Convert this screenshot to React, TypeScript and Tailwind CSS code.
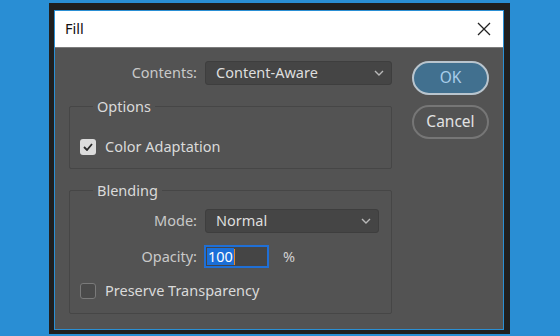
import React from "react";

const font = { fontFamily: '"Noto Sans", "Open Sans", sans-serif' };

function Chevron() {
  return (
    <svg width="10" height="6" viewBox="0 0 10 6" className="shrink-0">
      <polyline points="1,1 5,5 9,1" fill="none" stroke="#b9b9b9" strokeWidth="1.4" />
    </svg>
  );
}

function Select({ value, width }: { value: string; width: string }) {
  return (
    <div
      className={`flex h-[24px] ${width} items-center justify-between rounded-[3px] border border-[#3e3e3e] bg-[#454545] pl-[10px] pr-[7px] text-[14.5px] text-[#dedede]`}
    >
      <span>{value}</span>
      <Chevron />
    </div>
  );
}

function Checkbox({ checked }: { checked?: boolean }) {
  if (checked) {
    return (
      <div className="flex h-[16px] w-[16px] items-center justify-center rounded-[3px] bg-[#dcdcdc]">
        <svg width="10" height="8" viewBox="0 0 10 8">
          <polyline points="1,4 4,7 9,1" fill="none" stroke="#2a2a2a" strokeWidth="1.8" />
        </svg>
      </div>
    );
  }
  return <div className="h-[16px] w-[16px] rounded-[3px] border border-[#7a7a7a] bg-[#4a4a4a]" />;
}

export default function App() {
  return (
    <div className="h-[336px] w-[560px] overflow-hidden bg-[#298ed4] pl-[49px] pt-[3px]" style={font}>
      <div className="h-[331px] w-[461px] bg-[#1f1f1f] pl-[5px] pt-[7px]">
        <div className="flex h-[320px] w-[450px] flex-col border border-[#2a8fd4]">
          {/* title bar */}
          <div className="flex h-[36px] items-center justify-between bg-white pl-[10px] pr-[12px]">
            <span className="text-[14.5px] text-[#111]">Fill</span>
            <svg width="14" height="14" viewBox="0 0 14 14">
              <path d="M1 1 L13 13 M13 1 L1 13" stroke="#222" strokeWidth="1.3" />
            </svg>
          </div>
          <div className="h-px bg-[#7c7c7c]" />

          {/* body */}
          <div className="flex flex-1 bg-[#535353] pl-[14px] pt-[13px]">
            <div className="flex w-[323px] flex-col">
              <div className="flex items-center gap-[8px]">
                <span className="w-[128px] text-right text-[14.5px] text-[#c9c9c9]">Contents:</span>
                <Select value="Content-Aware" width="w-[187px]" />
              </div>

              <fieldset className="mt-[11px] h-[73px] rounded-[2px] border border-[#464646] px-0">
                <legend className="ml-[23px] px-[4px] text-[14.5px] leading-[20px] text-[#dadada]">Options</legend>
                <div className="mt-[20px] flex items-center gap-[9px] pl-[10px]">
                  <Checkbox checked />
                  <span className="text-[14.5px] text-[#dadada]">Color Adaptation</span>
                </div>
              </fieldset>

              <fieldset className="mt-[11px] h-[134px] rounded-[2px] border border-[#464646] px-0">
                <legend className="ml-[23px] px-[4px] text-[14.5px] leading-[20px] text-[#dadada]">Blending</legend>
                <div className="mt-[9px] flex items-center gap-[8px]">
                  <span className="w-[127px] text-right text-[14.5px] text-[#c9c9c9]">Mode:</span>
                  <Select value="Normal" width="w-[174px]" />
                </div>
                <div className="mt-[12px] flex items-center gap-[7px]">
                  <span className="w-[127px] text-right text-[14.5px] text-[#c9c9c9]">Opacity:</span>
                  <div className="flex h-[23px] w-[65px] items-center border-2 border-[#1f6fd6] bg-[#454545] pl-px">
                    <span className="bg-[#1b6fd8] px-px text-[14.5px] leading-[17px] text-white">100</span>
                    <span className="h-[16px] w-px bg-[#e8892b]" />
                  </div>
                  <span className="ml-[7px] text-[14.5px] text-[#d0d0d0]">%</span>
                </div>
                <div className="mt-[12px] flex items-center gap-[9px] pl-[10px]">
                  <Checkbox />
                  <span className="text-[14.5px] text-[#dadada]">Preserve Transparency</span>
                </div>
              </fieldset>
            </div>

            <div className="ml-[20px] flex flex-col gap-[10px]">
              <button className="h-[34px] w-[77px] rounded-full border-2 border-[#b9c5ce] bg-[#41708f] text-[15.5px] text-[#a9cdea]">
                OK
              </button>
              <button className="h-[34px] w-[77px] rounded-full border-2 border-[#767676] text-[15.5px] text-[#e2e2e2]">
                Cancel
              </button>
            </div>
          </div>
        </div>
      </div>
    </div>
  );
}
